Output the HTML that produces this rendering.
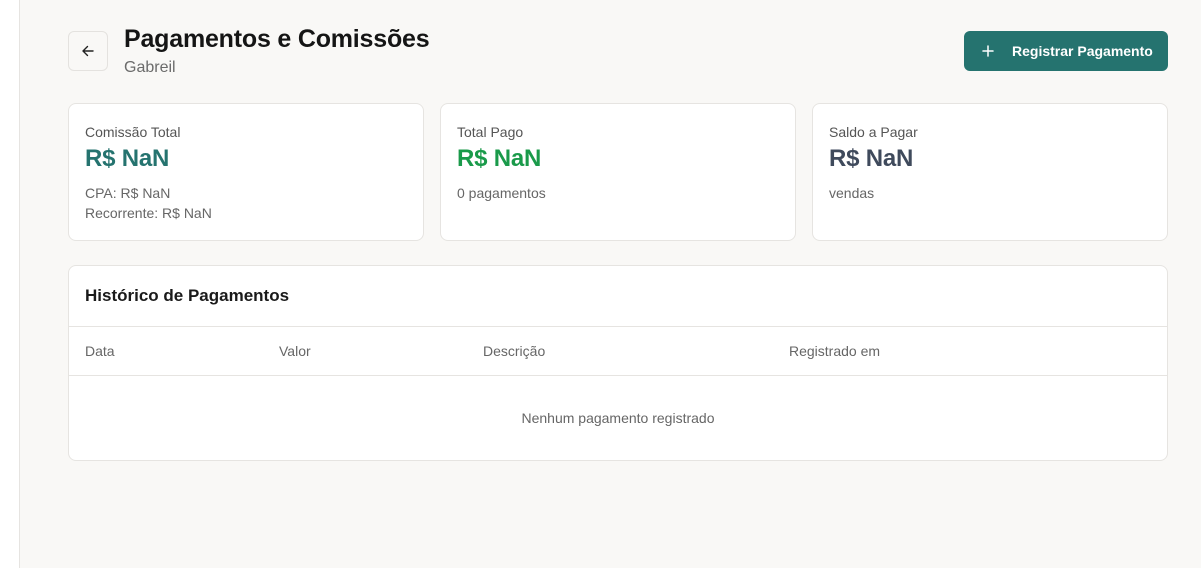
<!DOCTYPE html>
<html><head><meta charset="utf-8"><style>
*{box-sizing:border-box;margin:0;padding:0}
body{width:1201px;height:568px;overflow:hidden;background:#f9f8f6;font-family:"Liberation Sans",sans-serif;position:relative;color:#1a1a1a}
.side{position:absolute;left:0;top:0;width:20px;height:568px;background:#fff;border-right:1px solid #e6e4e1}
.abs{position:absolute}
.back{left:68px;top:31px;width:40px;height:40px;border:1px solid #e4e2df;border-radius:6px;background:#f9f8f6;display:flex;align-items:center;justify-content:center}
h1{position:absolute;left:124px;top:25px;font-size:25px;font-weight:700;letter-spacing:-0.2px;color:#151515}
.sub{left:124px;top:59px;font-size:16px;color:#6b6b6b}
.btn{left:964px;top:31px;width:204px;height:40px;background:#25736f;border-radius:6px;color:#fff;font-size:14px;font-weight:700;display:flex;align-items:center}
.card{position:absolute;top:103px;width:356px;height:138px;background:#fff;border:1px solid #e6e4e1;border-radius:8px;padding:20px 16px}
.lbl{font-size:14px;color:#555}
.val{font-size:24px;font-weight:700;margin-top:5px;letter-spacing:-0.2px}
.sm{font-size:14px;color:#666;line-height:20px}
.hist{left:68px;top:265px;width:1100px;height:196px;background:#fff;border:1px solid #e6e4e1;border-radius:8px}
.th{position:absolute;top:77px;font-size:14px;color:#666}
</style></head><body>
<div class="side"></div>
<div class="abs back"><svg width="14" height="14" viewBox="0 0 14 14" fill="none" stroke="#222" stroke-width="1.4" stroke-linecap="round" stroke-linejoin="round"><path d="M12 7H2M6.5 2.5L2 7l4.5 4.5"/></svg></div>
<h1>Pagamentos e Comissões</h1>
<div class="abs sub">Gabreil</div>
<div class="abs btn"><svg style="margin-left:18px" width="12" height="12" viewBox="0 0 12 12" stroke="#fff" stroke-width="1.5" stroke-linecap="round"><path d="M6 1v10M1 6h10"/></svg><span style="margin-left:18px">Registrar Pagamento</span></div>
<div class="card" style="left:68px"><div class="lbl">Comissão Total</div><div class="val" style="color:#25736f">R$ NaN</div><div class="sm" style="margin-top:10px">CPA: R$ NaN<br>Recorrente: R$ NaN</div></div>
<div class="card" style="left:440px"><div class="lbl">Total Pago</div><div class="val" style="color:#1a9a4a">R$ NaN</div><div class="sm" style="margin-top:10px">0 pagamentos</div></div>
<div class="card" style="left:812px"><div class="lbl">Saldo a Pagar</div><div class="val" style="color:#3f4a5c">R$ NaN</div><div class="sm" style="margin-top:10px">vendas</div></div>
<div class="abs hist">
<div style="position:absolute;left:16px;top:20px;font-size:17px;font-weight:600;color:#1a1a1a">Histórico de Pagamentos</div>
<div style="position:absolute;left:0;right:0;top:60px;border-top:1px solid #e6e4e1"></div>
<div class="th" style="left:16px">Data</div>
<div class="th" style="left:210px">Valor</div>
<div class="th" style="left:414px">Descrição</div>
<div class="th" style="left:720px">Registrado em</div>
<div style="position:absolute;left:0;right:0;top:109px;border-top:1px solid #e6e4e1"></div>
<div style="position:absolute;left:0;right:0;top:144px;text-align:center;font-size:14px;color:#666">Nenhum pagamento registrado</div>
</div>
</body></html>
